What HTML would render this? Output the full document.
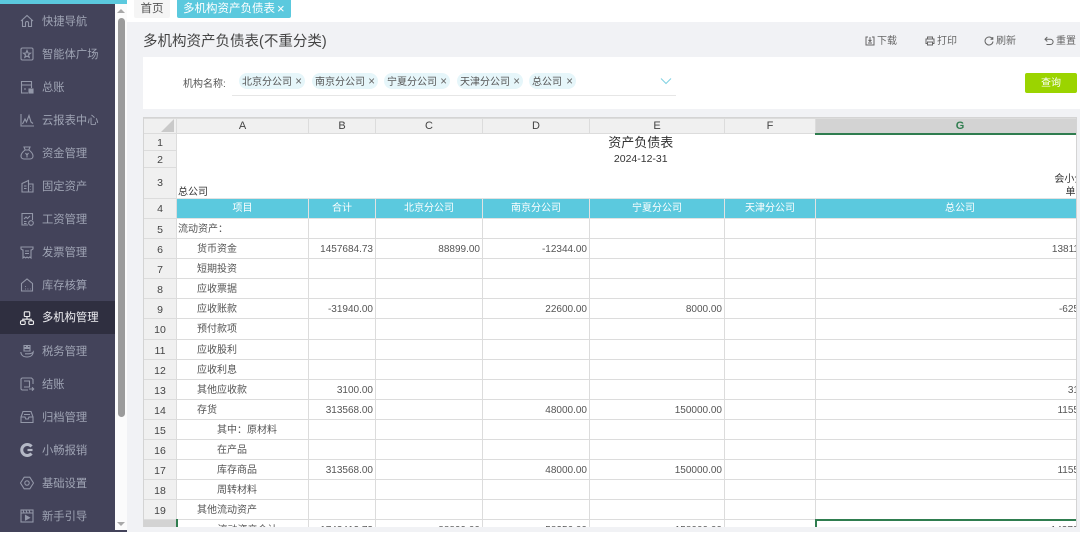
<!DOCTYPE html>
<html lang="zh"><head><meta charset="utf-8"><title>多机构资产负债表</title>
<style>
*{box-sizing:border-box}
html,body{margin:0;padding:0;width:1080px;height:532px;overflow:hidden;background:#fff;font-family:"Liberation Sans","Noto Sans CJK SC",sans-serif}
.a{position:absolute}
#side{left:0;top:0;width:115px;height:532px;background:#43435a}
.mi{position:absolute;left:0;width:115px;height:33px;line-height:35px;padding-left:42px;font-size:11.3px;color:#9fa4b4;white-space:nowrap}
.mi.on{background:#2f2f40;color:#f0f0f4}
.mi svg{position:absolute;left:19px;top:8px;width:16px;height:16px;fill:none;stroke:#9397a8;stroke-width:1.1}
.mi.on svg{stroke:#eee}
.tag{position:absolute;top:73px;height:16px;border-radius:8px;background:#e6f6fa;color:#555;font-size:10px;line-height:20px;padding-left:3px;white-space:nowrap}
.tag i{position:absolute;right:3px;top:0;font-style:normal;color:#666;font-size:11.5px;line-height:19px}
.tb{position:absolute;top:35px;font-size:10px;color:#666;line-height:14px;white-space:nowrap}
.tb svg{position:absolute;left:-12px;top:1px;width:10px;height:10px;fill:none;stroke:#666;stroke-width:1}
table{border-collapse:collapse;table-layout:fixed;width:963px;font-size:10px;color:#555;position:absolute;left:0;top:0}
td{border:1px solid #dcdcdc;padding:2px 2px 0;white-space:nowrap;overflow:hidden;text-align:right;background:#fff;line-height:12px}
td.h{background:#f0f0f0;color:#444;text-align:center;padding:2px 0 0;border-color:#dcdcdc;font-size:10.5px}
td.hh{font-size:11px;padding:0}
td.c{background:#5bc9de;color:#fff;text-align:center;border-color:#e2e2e2;padding:1px 2px 0}
td.l{text-align:left}.i1{padding-left:20px!important}.i2{padding-left:40px!important}
td.t{border:0}
.dn{position:relative;top:2px}
</style></head><body>

<div class="a" style="left:0;top:0;width:1080px;height:22px;background:#fff"></div>
<div class="a" style="left:127px;top:22px;width:953px;height:510px;background:#f1f2f5"></div>

<div class="a" id="side">
<div class="mi" style="top:5px"><svg viewBox="0 0 16 16"><path d="M2 8 8 2.500 14 8M3.500 7v6.500h3V10a1.500 1.500 0 0 1 3 0v3.500h3V7"/></svg>快捷导航</div>
<div class="mi" style="top:38px"><svg viewBox="0 0 16 16"><rect x="2" y="2" width="12" height="12" rx="1.500"/><path d="M8 4.500 9 7l2.500.2-2 1.600.7 2.500L8 10l-2.200 1.300.7-2.500-2-1.600L7 7z"/></svg>智能体广场</div>
<div class="mi" style="top:71px"><svg viewBox="0 0 16 16"><path d="M9 14H2.500V2.500h10V9M2.500 6h10M5 10h2"/><rect x="10" y="10" width="4" height="4" fill="#9397a8"/></svg>总账</div>
<div class="mi" style="top:104px"><svg viewBox="0 0 16 16"><path d="M2 2v12h13M3.500 12 6 7l1.500 3L10 3.500 12 10l2 1.500"/></svg>云报表中心</div>
<div class="mi" style="top:137px"><svg viewBox="0 0 16 16"><path d="M5 2h6L9.800 5H6.200zM6 5C3.500 7 2 9 2 11c0 2 1.500 3 3 3h6c1.500 0 3-1 3-3 0-2-1.500-4-4-6M6.500 8 8 10l1.500-2M8 10v2.500"/></svg>资金管理</div>
<div class="mi" style="top:170px"><svg viewBox="0 0 16 16"><path d="M3 5.500 9.500 2.500V14H3zM9.500 6H14v8H9.500M5 8h2.500M5 10.500h2.500M11.500 8.500v.5M11.500 11v.5"/></svg>固定资产</div>
<div class="mi" style="top:203px"><svg viewBox="0 0 16 16"><path d="M9 14H3V2.500h10.500V9M5 8l2-2 1.500 1.500L11 5M5 10.500h2.500M5 12.500h2.500"/><circle cx="12" cy="12" r="2.300"/></svg>工资管理</div>
<div class="mi" style="top:236px"><svg viewBox="0 0 16 16"><path d="M2 5V3h12v2l-1.500 1H12v8l-1.300-1-1.300 1L8 13l-1.400 1-1.300-1L4 14V6h-.5zM6 7h4M6 9.500h4"/></svg>发票管理</div>
<div class="mi" style="top:269px"><svg viewBox="0 0 16 16"><path d="M2.500 14V6.500L8 2l5.500 4.500V14zM6 9.500h.8M6 12h.8M8.500 12h.8M11 12h.6"/></svg>库存核算</div>
<div class="mi on" style="top:301px"><svg viewBox="0 0 16 16" style="top:9px"><rect x="5.300" y="1.800" width="5.400" height="4.700" rx=".7"/><path d="M8 6.500v2.700M3.800 11V9.200h8.400V11"/><rect x="1.500" y="10.800" width="4.700" height="3.700" rx="1.200"/><rect x="9.800" y="10.800" width="4.700" height="3.700" rx="1.200"/></svg>多机构管理</div>
<div class="mi" style="top:335px"><svg viewBox="0 0 16 16"><path d="M5 2.500h2.500v2H5zM8.500 2.500H11v2H8.500zM5 5.500h6v2.500H5zM1.800 9c.3 3.300 2.800 5 6.200 5s5.900-1.700 6.200-5c-1.500 1.800-3.500 1.800-5 1.800H6"/></svg>税务管理</div>
<div class="mi" style="top:368px"><svg viewBox="0 0 16 16"><path d="M14 8V3.500L12.500 2H3L2 3v10l1 1h6M5 5h5.500v6H5M10 13h4.500M13 11.300l1.700 1.700-1.700 1.700"/></svg>结账</div>
<div class="mi" style="top:401px"><svg viewBox="0 0 16 16"><path d="M4 2.500h8L14 8v5.500H2V8zM2 8h4l.8 2h2.400l.8-2h4M5 5.500h6"/></svg>归档管理</div>
<div class="mi" style="top:434px"><svg viewBox="0 0 16 16"><path d="M12.500 4.500A5.500 5.500 0 1 0 12.500 11.500" stroke-width="3" stroke="#b4b8c6"/><path d="M8.500 8h5" stroke-width="2.200" stroke="#b4b8c6"/></svg>小畅报销</div>
<div class="mi" style="top:467px"><svg viewBox="0 0 16 16"><path d="M5.200 2.200h5.600L14.500 8l-3.700 5.800H5.200L1.500 8z" stroke-linejoin="round"/><circle cx="8" cy="8" r="2.200"/></svg>基础设置</div>
<div class="mi" style="top:500px"><svg viewBox="0 0 16 16"><rect x="2" y="2" width="12" height="12"/><path d="M2 5h12M4 2l1 3M7 2l1 3M10 2l1 3"/><path d="M6.500 7.500v4.500l4-2.200z" fill="#9397a8"/></svg>新手引导</div>
</div>

<div class="a" style="left:115px;top:0;width:12px;height:532px;background:#fbfbfb"></div>
<div class="a" style="left:118px;top:18px;width:7px;height:399px;background:#9b9b9b;border-radius:3.500px"></div>
<div class="a" style="left:117px;top:9px;width:0;height:0;border-left:4px solid transparent;border-right:4px solid transparent;border-bottom:4px solid #a8a8a8"></div>
<div class="a" style="left:117px;top:522px;width:0;height:0;border-left:4px solid transparent;border-right:4px solid transparent;border-top:4px solid #a8a8a8"></div>
<div class="a" style="left:115px;top:530px;width:12px;height:2px;background:#43435a"></div>
<div class="a" style="left:0;top:0;width:127px;height:4px;background:#5bc9de"></div>

<div class="a" style="left:134px;top:0;width:36px;height:18px;background:#f5f5f5;border-radius:0 0 2px 2px;color:#555;font-size:11.500px;line-height:18px;text-align:center">首页</div>
<div class="a" style="left:177px;top:0;width:114px;height:18px;background:#5bc9de;border-radius:0 0 2px 2px;color:#fff;font-size:11.500px;line-height:18px;padding-left:6px;white-space:nowrap">多机构资产负债表<span style="position:absolute;left:100px;top:0;font-size:13px;font-weight:300">×</span></div>

<div class="a" style="left:143px;top:32px;font-size:14.500px;line-height:20px;color:#444;white-space:nowrap">多机构资产负债表(不重分类)</div>

<div class="tb" style="left:877px"><svg viewBox="0 0 10 10"><path d="M3 1H1v8h8V1H7M5 1v4M3.500 4 5 5.500 6.500 4M3 7h4"/></svg>下载</div>
<div class="tb" style="left:937px"><svg viewBox="0 0 10 10"><path d="M2.500 3V1h5v2M2.500 7.500H1V3h8v4.500H7.500M2.500 6h5v3h-5z"/></svg>打印</div>
<div class="tb" style="left:996px"><svg viewBox="0 0 10 10"><path d="M8.500 3A4 4 0 1 0 9 5.500M8.800 1v2.300H6.500"/></svg>刷新</div>
<div class="tb" style="left:1056px"><svg viewBox="0 0 10 10"><path d="M3.300 1 1 3.300l2.300 2.200M1 3.300h5.500a2.500 2.500 0 0 1 0 5.200H2.500"/></svg>重置</div>

<div class="a" style="left:143px;top:57px;width:937px;height:52px;background:#fff"></div>
<div class="a" style="left:183px;top:76px;font-size:10px;line-height:14px;color:#555;white-space:nowrap;padding-top:2px">机构名称:</div>
<div class="tag" style="left:239px;width:66px">北京分公司<i>×</i></div>
<div class="tag" style="left:312px;width:66px">南京分公司<i>×</i></div>
<div class="tag" style="left:384px;width:66px">宁夏分公司<i>×</i></div>
<div class="tag" style="left:457px;width:66px">天津分公司<i>×</i></div>
<div class="tag" style="left:529px;width:47px">总公司<i>×</i></div>
<div class="a" style="left:232px;top:95px;width:444px;height:1px;background:#e6e6e6"></div>
<svg class="a" style="left:660px;top:77px;width:12px;height:8px" viewBox="0 0 12 8" fill="none" stroke="#7fd0e2" stroke-width="1"><path d="M1 1.500 6 6.500 11 1.500"/></svg>
<div class="a" style="left:1025px;top:73px;width:52px;height:20px;background:#9bd400;border-radius:2px;color:#fff;font-size:10px;line-height:21px;text-align:center">查询</div>

<div class="a" style="left:143px;top:117px;width:933px;height:410px;overflow:hidden;background:#fff;border-top:1px solid #d4d4d4;border-left:1px solid #d4d4d4">
<table style="left:-1px">
<colgroup><col style="width:33px"><col style="width:132px"><col style="width:67px"><col style="width:107px"><col style="width:107px"><col style="width:135px"><col style="width:91px"><col style="width:291px"></colgroup>
<tr style="height:15px"><td class="h hh"></td><td class="h hh">A</td><td class="h hh">B</td><td class="h hh">C</td><td class="h hh">D</td><td class="h hh">E</td><td class="h hh">F</td><td class="h hh" style="background:#d3d3d3;color:#2f7d4f;font-weight:bold;border-bottom:2px solid #2f7d4f;padding-right:2px">G</td></tr>
<tr style="height:17px"><td class="h">1</td><td class="t" colspan="7" style="text-align:center;font-size:13px;color:#333;line-height:16px;padding:0 4px 0 2px">资产负债表</td></tr>
<tr style="height:17px"><td class="h">2</td><td class="t" colspan="7" style="text-align:center;color:#333;font-size:10.500px;padding:0 4px 0 2px">2024-12-31</td></tr>
<tr style="height:31px"><td class="h" style="padding:0"></td><td class="t l" colspan="5" style="vertical-align:bottom;color:#333;padding:0 1px 1px"><span class="dn">总公司</span></td><td class="t"></td><td class="t" style="vertical-align:bottom;color:#333;padding:0 1px 1px 0;line-height:13px"><span class="dn">会小企01表<br>单位：元</span></td></tr>
<tr style="height:20px"><td class="h" style="padding:0">4</td><td class="c">项目</td><td class="c">合计</td><td class="c">北京分公司</td><td class="c">南京分公司</td><td class="c">宁夏分公司</td><td class="c">天津分公司</td><td class="c" style="padding-right:4px">总公司</td></tr>
<tr style="height:20px"><td class="h">5</td><td class="l" style="padding-left:1px">流动资产：</td><td></td><td></td><td></td><td></td><td></td><td></td></tr>
<tr style="height:20px"><td class="h">6</td><td class="l i1">货币资金</td><td>1457684.73</td><td>88899.00</td><td>-12344.00</td><td></td><td></td><td>1381129.73</td></tr>
<tr style="height:20px"><td class="h">7</td><td class="l i1">短期投资</td><td></td><td></td><td></td><td></td><td></td><td></td></tr>
<tr style="height:20px"><td class="h">8</td><td class="l i1">应收票据</td><td></td><td></td><td></td><td></td><td></td><td></td></tr>
<tr style="height:20px"><td class="h">9</td><td class="l i1">应收账款</td><td>-31940.00</td><td></td><td>22600.00</td><td>8000.00</td><td></td><td>-62540.00</td></tr>
<tr style="height:21px"><td class="h">10</td><td class="l i1">预付款项</td><td></td><td></td><td></td><td></td><td></td><td></td></tr>
<tr style="height:20px"><td class="h">11</td><td class="l i1">应收股利</td><td></td><td></td><td></td><td></td><td></td><td></td></tr>
<tr style="height:20px"><td class="h">12</td><td class="l i1">应收利息</td><td></td><td></td><td></td><td></td><td></td><td></td></tr>
<tr style="height:20px"><td class="h">13</td><td class="l i1">其他应收款</td><td>3100.00</td><td></td><td></td><td></td><td></td><td>3100.00</td></tr>
<tr style="height:20px"><td class="h">14</td><td class="l i1">存货</td><td>313568.00</td><td></td><td>48000.00</td><td>150000.00</td><td></td><td>115568.00</td></tr>
<tr style="height:20px"><td class="h">15</td><td class="l i2">其中：原材料</td><td></td><td></td><td></td><td></td><td></td><td></td></tr>
<tr style="height:20px"><td class="h">16</td><td class="l i2">在产品</td><td></td><td></td><td></td><td></td><td></td><td></td></tr>
<tr style="height:20px"><td class="h">17</td><td class="l i2">库存商品</td><td>313568.00</td><td></td><td>48000.00</td><td>150000.00</td><td></td><td>115568.00</td></tr>
<tr style="height:20px"><td class="h">18</td><td class="l i2">周转材料</td><td></td><td></td><td></td><td></td><td></td><td></td></tr>
<tr style="height:20px"><td class="h">19</td><td class="l i1">其他流动资产</td><td></td><td></td><td></td><td></td><td></td><td></td></tr>
<tr style="height:20px"><td class="h" style="background:#d3d3d3;border-right:2px solid #2f7d4f">20</td><td class="l i2">流动资产合计</td><td>1743412.73</td><td>88899.00</td><td>58256.00</td><td>158000.00</td><td></td><td style="border:2px solid #2f7d4f">1437257.73</td></tr>
</table>
<div class="a" style="left:17px;top:1px;width:0;height:0;border-left:13px solid transparent;border-bottom:13px solid #c9c9c9"></div>
<div class="a" style="left:0;top:49px;width:32px;height:31px;line-height:33px;text-align:center;font-size:10.500px;color:#444">3</div>
</div>
<div class="a" style="left:1076px;top:117px;width:1px;height:410px;background:#d4d4d4"></div>
</body></html>
